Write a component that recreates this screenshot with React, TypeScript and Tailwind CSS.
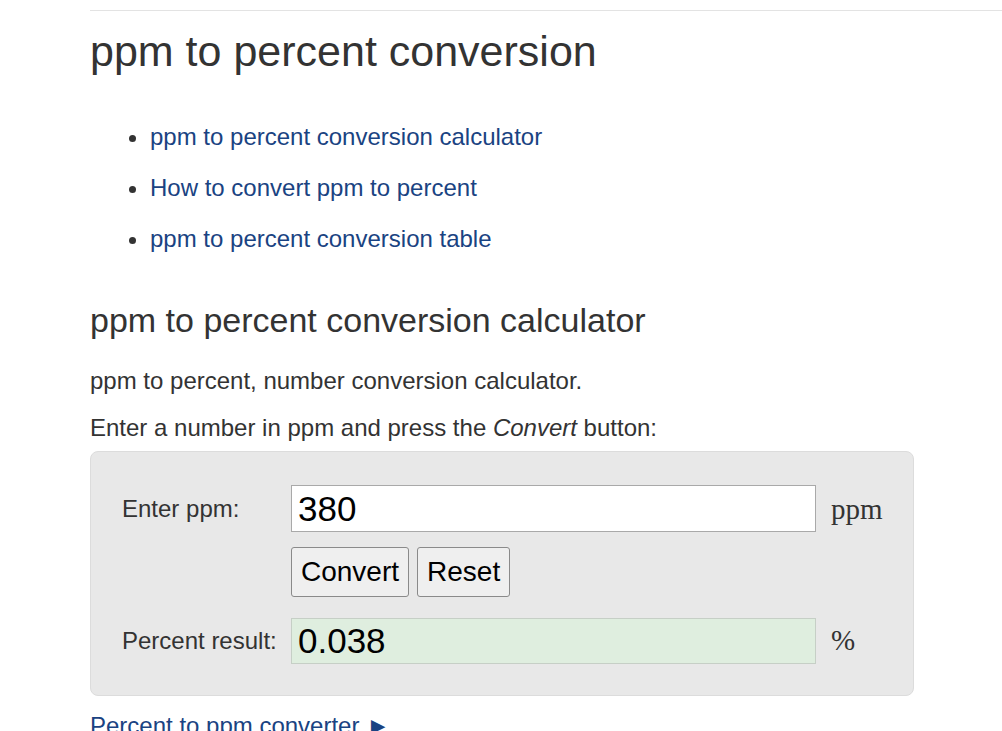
import React from "react";

export default function App() {
  return (
    <div className="min-h-[731px] bg-white text-[#333] font-['Liberation_Sans',Arial,sans-serif]">
      <div className="pl-[90px] pt-[10px]">
        <div className="h-px bg-[#e3e3e3]" />
        <h1 className="mt-[16px] text-[43px] leading-[48px] text-[#333]">ppm to percent conversion</h1>
        <ul className="mt-[48px] ml-[60px] list-disc text-[24px] leading-[28px] text-[#1a4382] marker:text-[#333]">
          <li className="mb-[23px]"><a>ppm to percent conversion calculator</a></li>
          <li className="mb-[23px]"><a>How to convert ppm to percent</a></li>
          <li><a>ppm to percent conversion table</a></li>
        </ul>
        <h2 className="mt-[47px] text-[34px] leading-[40px] text-[#333]">ppm to percent conversion calculator</h2>
        <p className="mt-[27px] text-[24px] leading-[28px]">ppm to percent, number conversion calculator.</p>
        <p className="mt-[19px] text-[24px] leading-[28px]">
          Enter a number in ppm and press the <i>Convert</i> button:
        </p>
        <div className="mt-[9px] w-[824px] rounded-[8px] border border-[#dcdcdc] bg-[#e8e8e8] pl-[31px] pt-[33px] pb-[31px]">
          <div className="grid grid-cols-[169px_525px_auto] items-center">
            <div className="text-[24px] leading-[28px]">Enter ppm:</div>
            <div className="h-[47px] border border-[#a9a9a9] bg-white px-[6px] text-[35px] leading-[45px] text-black">380</div>
            <div className="pl-[15px] pt-[2px] font-['Liberation_Serif','Times_New_Roman',serif] text-[29px]">ppm</div>

            <div />
            <div className="mt-[15px] flex gap-[8px]">
              <button className="h-[50px] rounded-[3px] border border-[#8a8a8a] bg-[#efefef] px-[9px] text-[28px] text-black">Convert</button>
              <button className="h-[50px] rounded-[3px] border border-[#8a8a8a] bg-[#efefef] px-[9px] text-[28px] text-black">Reset</button>
            </div>
            <div />

            <div className="mt-[21px] text-[24px] leading-[28px]">Percent result:</div>
            <div className="mt-[21px] h-[46px] border border-[#c6cfc6] bg-[#dfeedf] px-[6px] text-[35px] leading-[44px] text-black">0.038</div>
            <div className="mt-[21px] pl-[15px] font-['Liberation_Serif','Times_New_Roman',serif] text-[29px]">%</div>
          </div>
        </div>
        <p className="mt-[16px] text-[24px] leading-[28px] text-[#1a4382]">Percent to ppm converter ►</p>
      </div>
    </div>
  );
}
